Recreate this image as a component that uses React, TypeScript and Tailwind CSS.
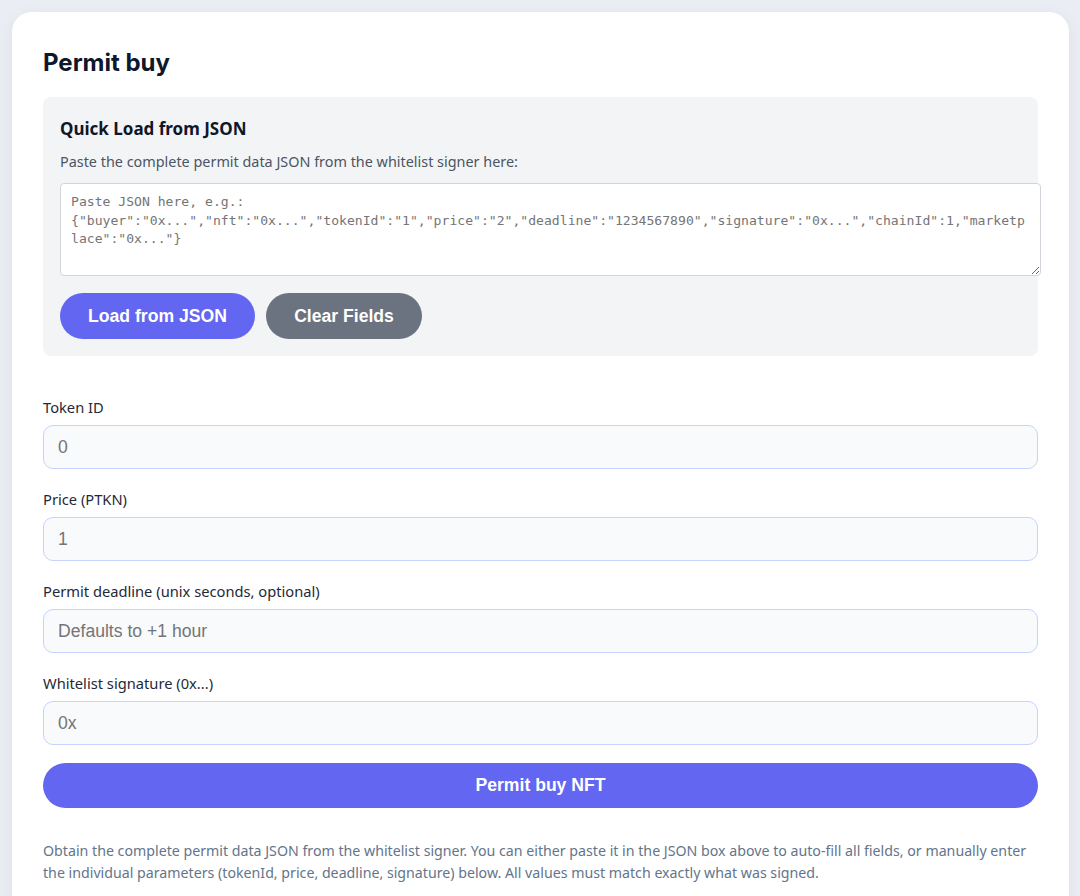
import React from "react";

function Field({ label, placeholder }: { label: string; placeholder: string }) {
  return (
    <div className="flex flex-col">
      <label className="mb-[8px] text-[14.7px] leading-[20px] text-[#1f2937]">{label}</label>
      <input
        className="h-[44px] w-full rounded-[10px] border border-[#c7d2fe] bg-[#f8fafc] px-[14px] font-['Liberation_Sans',Arial,sans-serif] text-[17.6px] text-[#111827] outline-none placeholder:text-[#757575]"
        placeholder={placeholder}
      />
    </div>
  );
}

export default function App() {
  return (
    <div className="min-h-[896px] bg-[#eaeef4] pl-[12px] pr-[11px] pt-[12px] font-['Noto_Sans','Open_Sans',sans-serif]">
      <div className="rounded-[20px] bg-white px-[31px] pb-[40px] pt-[35px] shadow-[0_4px_16px_rgba(15,23,42,0.06)]">
        <h2 className="mb-[18px] font-['Inter','Noto_Sans',sans-serif] text-[24px] font-bold leading-[32px] text-[#0f172a]">
          Permit buy
        </h2>
        <div className="rounded-[8px] bg-[#f3f4f6] pb-[17px] pl-[17px] pt-[20px]">
          <h3 className="mb-[11px] text-[17px] font-bold leading-[24px] text-[#0f172a]">Quick Load from JSON</h3>
          <p className="mb-[11px] text-[14.4px] leading-[20px] text-[#4b5563]">
            Paste the complete permit data JSON from the whitelist signer here:
          </p>
          <textarea
            className="block h-[93px] w-[981px] resize-y rounded-[4px] border border-[#d1d5db] bg-white p-[10px] pt-[9px] font-['DejaVu_Sans_Mono',monospace] text-[13.1px] leading-[18.5px] text-[#111827] outline-none placeholder:text-[#757575]"
            placeholder={
              'Paste JSON here, e.g.:\n{"buyer":"0x...","nft":"0x...","tokenId":"1","price":"2","deadline":"1234567890","signature":"0x...","chainId":1,"marketplace":"0x..."}'
            }
          />
          <div className="mt-[17px] flex gap-[11px]">
            <button className="h-[46px] w-[195px] rounded-full bg-[#6366f1] font-['Liberation_Sans',Arial,sans-serif] text-[17.6px] font-bold text-white">
              Load from JSON
            </button>
            <button className="h-[46px] w-[156px] rounded-full bg-[#6b7280] font-['Liberation_Sans',Arial,sans-serif] text-[17.6px] font-bold text-white">
              Clear Fields
            </button>
          </div>
        </div>
        <div className="mt-[41px] flex flex-col gap-[20px]">
          <Field label="Token ID" placeholder="0" />
          <Field label="Price (PTKN)" placeholder="1" />
          <Field label="Permit deadline (unix seconds, optional)" placeholder="Defaults to +1 hour" />
          <Field label="Whitelist signature (0x...)" placeholder="0x" />
        </div>
        <button className="mt-[18px] h-[45px] w-full rounded-full bg-[#6366f1] font-['Liberation_Sans',Arial,sans-serif] text-[17.6px] font-bold text-white">
          Permit buy NFT
        </button>
        <p className="mt-[32px] text-[14.2px] leading-[22px] text-[#64748b]">
          Obtain the complete permit data JSON from the whitelist signer. You can either paste it in the JSON box above
          to auto-fill all fields, or manually enter the individual parameters (tokenId, price, deadline, signature)
          below. All values must match exactly what was signed.
        </p>
      </div>
    </div>
  );
}
